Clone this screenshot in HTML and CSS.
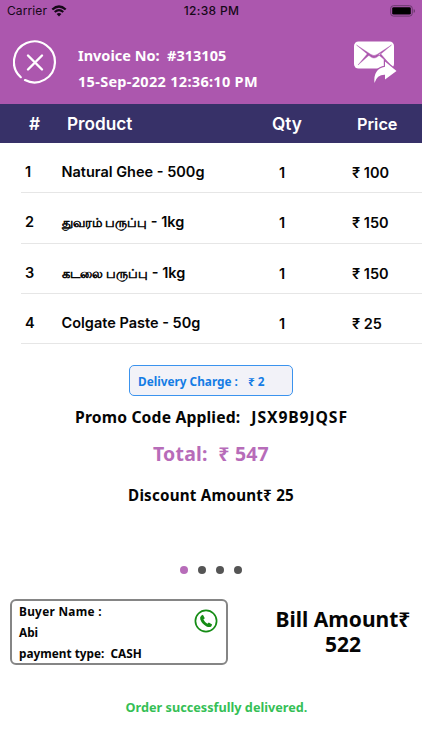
FILE: index.html
```html
<!DOCTYPE html>
<html lang="en">
<head>
<meta charset="utf-8">
<title>Invoice</title>
<link rel="stylesheet" href="styles.css">
</head>
<body>
<header class="top">
  <div class="status">
    <div class="carrier"><span>Carrier</span>
      <svg width="16" height="12" viewBox="0 0 16 12" fill="none" stroke="#160818"><path d="M1.3 4.5Q8-1.5 14.7 4.5" stroke-width="2.3"/><path d="M3.7 7Q8 3.2 12.3 7" stroke-width="2.1"/><path d="M8 11.5 5.6 9Q8 7.1 10.4 9Z" fill="#160818" stroke="none"/></svg>
    </div>
    <span class="clock">12:38 PM</span>
    <svg class="battery" width="26" height="12" viewBox="0 0 26 12"><rect x=".7" y=".7" width="21.6" height="10.4" rx="2.8" fill="none" stroke="#693a6c"/><rect x="2.2" y="2.2" width="18.6" height="7.4" rx="1.4" fill="#000"/><path d="M23.7 4v4q1.3-.6 1.3-2t-1.3-2" fill="#693a6c"/></svg>
  </div>
  <div class="heading">
    <svg class="close" width="44" height="44" viewBox="0 0 44 44" fill="none" stroke="#fff" stroke-width="2.2" stroke-linecap="round"><path d="M12 40.1A20.5 20.5 0 1 0 7.8 37.2"/><path d="M15 15.500 29 29.500M29 15.500 15 29.500" stroke-width="2.4"/></svg>
    <div class="meta"><span class="no">Invoice No:&nbsp; #313105</span><span class="date">15-Sep-2022 12:36:10 PM</span></div>
    <svg class="mail" width="44" height="43" viewBox="0 0 44 43"><rect x="1" y=".5" width="40" height="27" rx="4.5" fill="#fff"/><path d="M3.500 4 17.500 13.200Q21 16 24.500 13.200L38.500 4 25 15.300Q21 18.800 17 15.300ZM5 24 14.800 12.300 16.500 13.800ZM36.500 23 27.200 12.300 25.500 13.800Z" fill="#ac57ae" stroke="#ac57ae" stroke-width=".4"/><path d="M32 20.5 43.500 30 32 38.5V33.8Q24 33.500 21.500 42Q20 28 32 25.800Z" fill="#fff" stroke="#ac57ae" stroke-width="2.4" paint-order="stroke"/></svg>
  </div>
</header>
<div class="cols"><span class="hash">#</span><span class="product">Product</span><span>Qty</span><span class="price">Price</span></div>
<main>
  <section class="items">
    <div class="row"><b class="num">1</b><span class="name">Natural Ghee - 500g</span><span>1</span><span>₹ 100</span></div>
    <div class="row"><b class="num">2</b><span class="name"><i class="tamil">துவரம் பருப்பு</i> - 1kg</span><span>1</span><span>₹ 150</span></div>
    <div class="row"><b class="num">3</b><span class="name"><i class="tamil">கடலை பருப்பு</i> - 1kg</span><span>1</span><span>₹ 150</span></div>
    <div class="row"><b class="num">4</b><span class="name">Colgate Paste - 50g</span><span>1</span><span>₹ 25</span></div>
  </section>
  <div class="delivery"><span>Delivery Charge :</span><span>₹ 2</span></div>
  <div class="promo"><span>Promo Code Applied:</span><span class="code">JSX9B9JQSF</span></div>
  <div class="total">Total:&nbsp; ₹ 547</div>
  <div class="discount">Discount Amount₹ 25</div>
  <div class="dots"><i class="on"></i><i></i><i></i><i></i></div>
  <section class="summary">
    <div class="buyer">
      <div class="who"><span class="bn">Buyer Name :</span><span>Abi</span><span class="pay">payment type:&nbsp; CASH</span></div>
      <svg width="24" height="24" viewBox="0 0 24 24"><circle cx="12" cy="12" r="10.6" fill="none" stroke="#158c15" stroke-width="1.7"/><path d="M7.4 6.4 8.9 5.8 10.8 9.3 9.4 10.6Q10.8 13.5 13.4 14.7L14.8 13.4 18.1 15.6 17.4 17.2Q15.7 18.8 12.5 17.4Q8 15.2 6.3 10.6Q5.5 8 7.4 6.4Z" fill="#158c15"/></svg>
    </div>
    <div class="bill">Bill Amount₹ 522</div>
  </section>
  <div class="done">Order successfully delivered.</div>
</main>
</body>
</html>
```
FILE: styles.css
```css
* { box-sizing: border-box; }
body { margin: 0; width: 422px; height: 750px; overflow: hidden; background: #fff; color: #050505; font-family: "Noto Sans", sans-serif; font-weight: 700; white-space: nowrap; }
svg { display: block; flex: none; }
.top { height: 104px; background: #ac57ae; }
.status { height: 22px; display: grid; grid-template-columns: 1fr auto 1fr; align-items: center; padding: 0 6px 0 7px; font: 500 12px/22px Inter, sans-serif; color: #160818; }
.carrier { display: flex; gap: 4px; align-items: center; font-weight: 400; letter-spacing: .1px; }
.clock { letter-spacing: .3px; }
.battery { justify-self: end; }
.heading { display: flex; padding-left: 13px; color: #fff; }
.close { margin-top: 18px; }
.meta { display: flex; flex-direction: column; width: 296px; padding: 20px 0 0 21px; font-size: 14.5px; line-height: 26px; }
.date { letter-spacing: .3px; }
.mail { margin-top: 19px; }
.cols { height: 39px; display: grid; grid-template-columns: 67px 205px 85px 65px; background: #373168; color: #fff; font: 600 17.2px/39px Inter, sans-serif; }
.hash { padding-left: 29px; }
.price { font-size: 16.3px; padding-top: 1px; }
.items { margin-left: 21px; }
.row { height: 50px; display: grid; grid-template-columns: 40.5px 217.5px 73px 69px; border-bottom: 1px solid #e6e6e6; font: 600 14.5px/60px Inter, "Noto Sans", sans-serif; }
.row:nth-child(2) { height: 51px; }
.num { padding-left: 4px; font-weight: 600; line-height: 57px; }
.name { line-height: 58px; }
.tamil { font-style: normal; font-weight: 400; font-size: 13px; -webkit-text-stroke: .6px #050505; }
.delivery { margin: 21px auto 0; width: 164px; height: 31px; border: 1px solid #3b93ee; border-radius: 5px; background: #f2f2f8; color: #147ce5; padding-left: 8px; display: flex; gap: 10px; font-size: 11.8px; line-height: 30px; }
.promo { display: flex; justify-content: center; gap: 11px; margin-top: 8px; font-size: 15.7px; line-height: 26px; letter-spacing: .15px; }
.code { letter-spacing: .9px; margin-right: -1px; }
.total { text-align: center; color: #b76cb9; font-size: 19.5px; line-height: 30px; margin-top: 9px; letter-spacing: .2px; }
.discount { text-align: center; font-size: 15.2px; line-height: 24px; margin-top: 14px; letter-spacing: .2px; }
.dots { display: flex; justify-content: center; gap: 10px; margin-top: 59px; }
.dots i { width: 8px; height: 8px; border-radius: 50%; background: #555; }
.dots .on { background: #b76cb9; }
.summary { display: flex; margin: 25px 0 0 10px; }
.buyer { width: 218px; height: 66px; border: 2px solid #858585; border-radius: 6px; display: flex; padding: 0 8px 0 7px; justify-content: space-between; }
.buyer svg { margin-top: 8px; }
.who { display: flex; flex-direction: column; font-size: 11.8px; line-height: 21px; }
.bn { letter-spacing: .3px; }
.bill { width: 138px; margin-left: 46px; padding-top: 8px; white-space: normal; text-align: center; font-size: 21px; line-height: 25px; }
.done { text-align: center; color: #35bf56; font-size: 12.7px; line-height: 20px; margin: 32px 0 0 11px; }
```
